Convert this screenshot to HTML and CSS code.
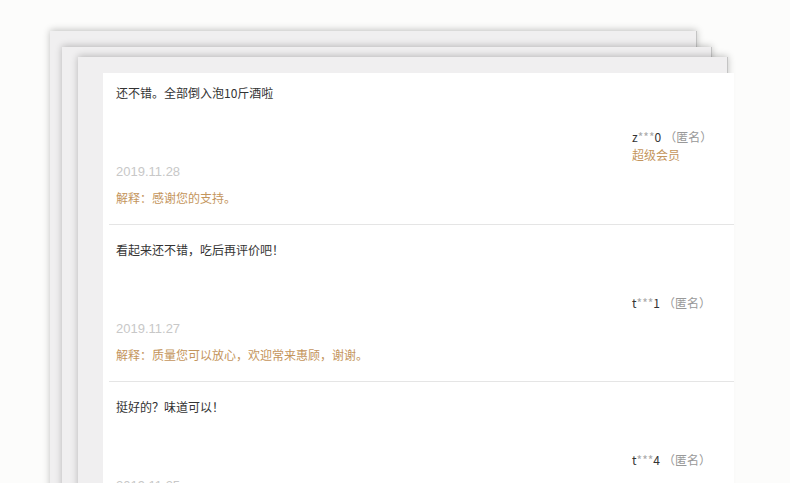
FILE: index.html
```html
<!DOCTYPE html>
<html lang="zh-CN">

<head>
    <meta charset="UTF-8">
    <meta name="viewport" content="width=device-width, initial-scale=1.0">
    <title>评价</title>
    <link rel="stylesheet" href="styles.css">
</head>

<body>
    <div class="stack">
        <div class="sheet sheet-1">
            <div class="sheet sheet-2">
                <div class="sheet sheet-3">
                    <div class="board">
                        <ul class="reviews">
                            <li class="review">
                                <p class="comment">还不错。全部倒入泡10斤酒啦</p>
                                <div class="meta meta-vip">
                                    <div class="user"><span class="nick">z<i>***</i>0</span><span class="anon">（匿名）</span></div>
                                    <div class="level">超级会员</div>
                                </div>
                                <div class="date">2019.11.28</div>
                                <p class="reply">解释：感谢您的支持。</p>
                            </li>
                            <li class="review">
                                <p class="comment">看起来还不错，吃后再评价吧！</p>
                                <div class="meta">
                                    <div class="user"><span class="nick">t<i>***</i>1</span><span class="anon">（匿名）</span></div>
                                </div>
                                <div class="date">2019.11.27</div>
                                <p class="reply">解释：质量您可以放心，欢迎常来惠顾，谢谢。</p>
                            </li>
                            <li class="review">
                                <p class="comment">挺好的？味道可以！</p>
                                <div class="meta">
                                    <div class="user"><span class="nick">t<i>***</i>4</span><span class="anon">（匿名）</span></div>
                                </div>
                                <div class="date">2019.11.25</div>
                                <p class="reply">解释：感谢您的支持。</p>
                            </li>
                        </ul>
                    </div>
                </div>
            </div>
        </div>
    </div>
</body>

</html>
```

FILE: styles.css
```css
* {
    box-sizing: border-box;
}

body {
    margin: 0;
    height: 483px;
    overflow: hidden;
    background-color: #fcfcfb;
    font-family: "Noto Sans CJK SC", "Microsoft YaHei", sans-serif;
    font-size: 12px;
    color: #333;
}

.stack {
    padding: 31px 0 0 50px;
}

.sheet {
    background-color: #f0eff0;
    box-shadow: 0 -1px 7px rgba(0, 0, 0, 0.24);
    border-right: 1px solid #c4c4c4;
}

.sheet-1 {
    width: 647px;
    padding: 16px 0 0 12px;
}

.sheet-2 {
    width: 650px;
    padding: 10px 0 0 16px;
}

.sheet-3 {
    width: 650px;
    padding: 16px 0 0 25px;
}

.board {
    width: 631px;
    min-height: 520px;
    background-color: #fff;
}

.reviews {
    list-style: none;
    margin: 0;
    padding: 0 0 0 6px;
}

.review {
    padding: 16px 7px 17px;
    border-bottom: 1px solid #e5e5e5;
    line-height: 18px;
}

.review:first-child {
    padding-top: 11px;
}

.comment {
    margin: 0;
}

.meta {
    height: 62px;
    padding: 35px 0 0 516px;
}

.meta-vip {
    padding-top: 26px;
}

.nick i {
    font-style: normal;
    color: #aaa;
}

.anon {
    margin-left: 3px;
    color: #999;
}

.level {
    color: #c4955c;
}

.date {
    font-family: "Liberation Sans", Arial, sans-serif;
    font-size: 13px;
    line-height: 16px;
    color: #c8c8c8;
}

.reply {
    margin: 9px 0 0;
    color: #c4955c;
}
```
